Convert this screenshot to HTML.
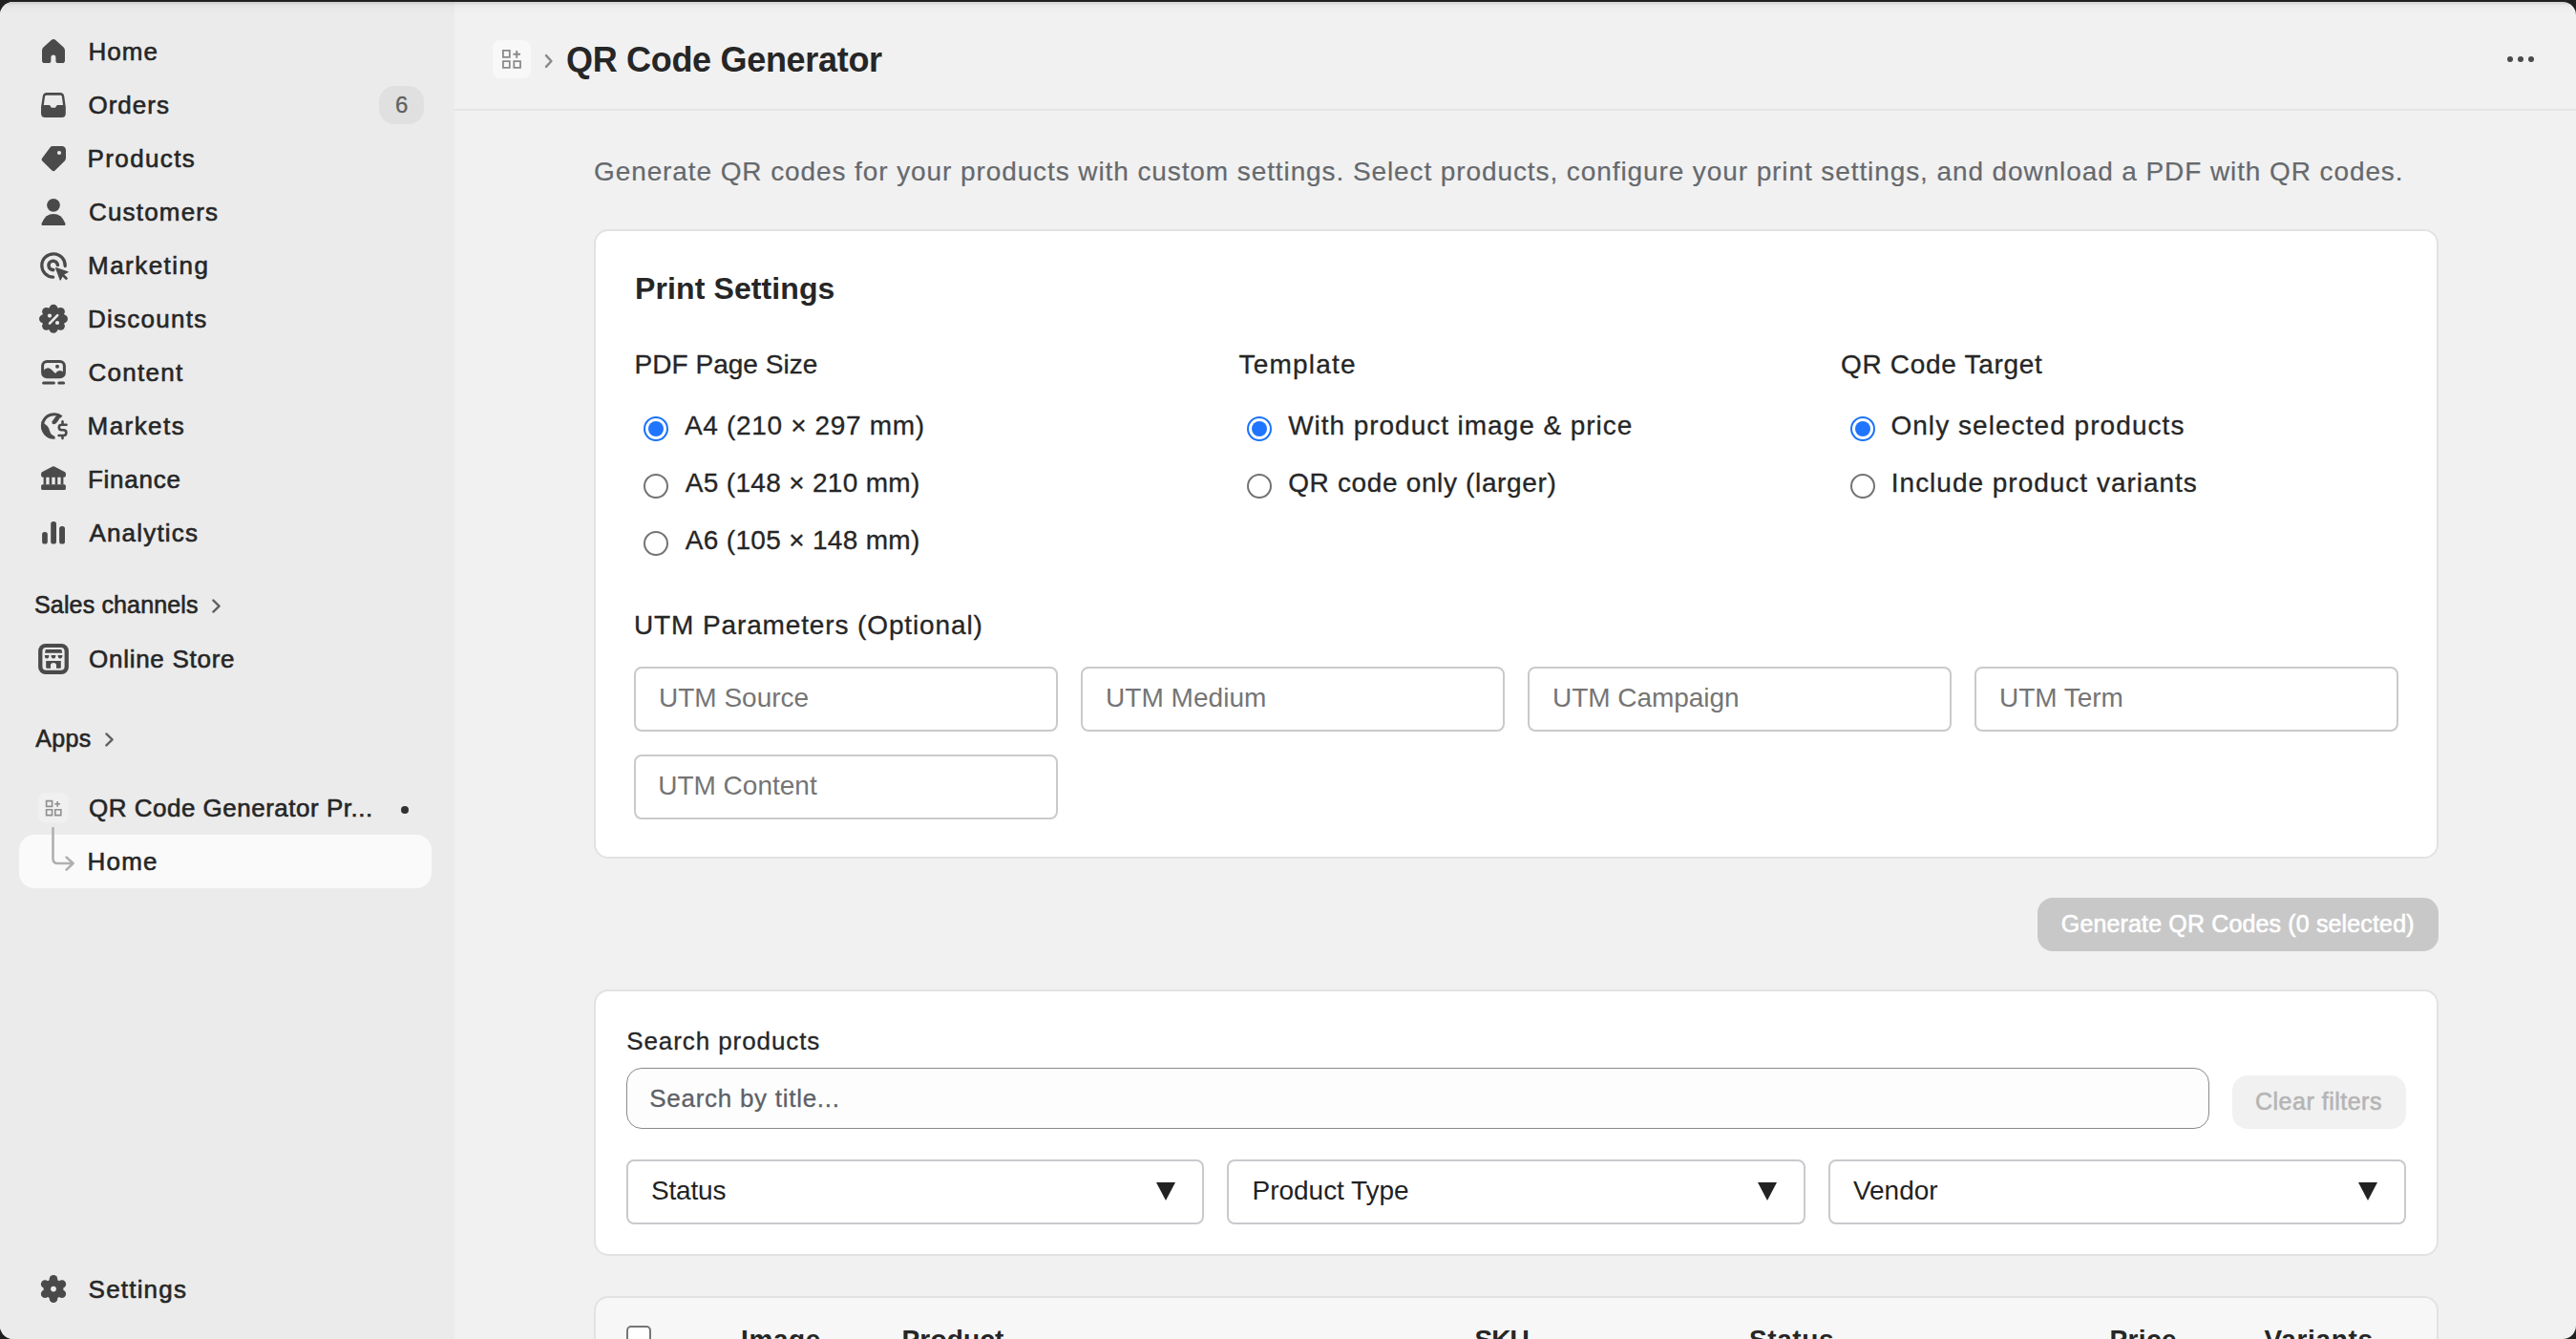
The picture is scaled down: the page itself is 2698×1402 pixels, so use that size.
<!DOCTYPE html>
<html><head><meta charset="utf-8"><style>
html,body{margin:0;padding:0;width:2698px;height:1402px;overflow:hidden;background:#202020;}
body{font-family:"Liberation Sans",sans-serif;}
#frame{position:absolute;left:0;top:2px;width:2698px;height:1400px;border-radius:14px;overflow:hidden;background:#f1f1f1;}
#side{position:absolute;left:0;top:0;width:476px;height:1400px;background:#ebebeb;}
.t{position:absolute;white-space:pre;}
.r{position:absolute;}
</style></head><body>
<div id="frame">
<div id="side"></div>
<div style="position:absolute;left:0;top:0;width:2698px;height:14px;background:linear-gradient(to bottom, rgba(0,0,0,0.11) 0px, rgba(0,0,0,0.10) 1.5px, rgba(0,0,0,0.045) 3px, rgba(0,0,0,0.02) 6px, rgba(0,0,0,0) 13px);"></div>
<div style="position:absolute;left:0;top:-2px;width:2698px;height:1402px;">
<div class="t" id="t0" style="left:92.60px;top:40.99px;font-size:26px;line-height:26px;color:#262626;font-weight:400;-webkit-text-stroke:0.6px #262626;letter-spacing:1.000px;">Home</div>
<div class="t" id="t1" style="left:92.40px;top:96.99px;font-size:26px;line-height:26px;color:#262626;font-weight:400;-webkit-text-stroke:0.6px #262626;letter-spacing:1.040px;">Orders</div>
<div class="t" id="t2" style="left:91.60px;top:152.99px;font-size:26px;line-height:26px;color:#262626;font-weight:400;-webkit-text-stroke:0.6px #262626;letter-spacing:1.371px;">Products</div>
<div class="t" id="t3" style="left:93.00px;top:208.99px;font-size:26px;line-height:26px;color:#262626;font-weight:400;-webkit-text-stroke:0.6px #262626;letter-spacing:1.175px;">Customers</div>
<div class="t" id="t4" style="left:92.00px;top:264.99px;font-size:26px;line-height:26px;color:#262626;font-weight:400;-webkit-text-stroke:0.6px #262626;letter-spacing:1.475px;">Marketing</div>
<div class="t" id="t5" style="left:92.00px;top:320.99px;font-size:26px;line-height:26px;color:#262626;font-weight:400;-webkit-text-stroke:0.6px #262626;letter-spacing:1.250px;">Discounts</div>
<div class="t" id="t6" style="left:92.40px;top:376.99px;font-size:26px;line-height:26px;color:#262626;font-weight:400;-webkit-text-stroke:0.6px #262626;letter-spacing:1.300px;">Content</div>
<div class="t" id="t7" style="left:91.60px;top:432.99px;font-size:26px;line-height:26px;color:#262626;font-weight:400;-webkit-text-stroke:0.6px #262626;letter-spacing:1.433px;">Markets</div>
<div class="t" id="t8" style="left:92.00px;top:488.99px;font-size:26px;line-height:26px;color:#262626;font-weight:400;-webkit-text-stroke:0.6px #262626;letter-spacing:0.733px;">Finance</div>
<div class="t" id="t9" style="left:93.40px;top:544.99px;font-size:26px;line-height:26px;color:#262626;font-weight:400;-webkit-text-stroke:0.6px #262626;letter-spacing:1.200px;">Analytics</div>
<div class="r" style="left:397px;top:90px;width:47px;height:40px;background:#e0e0e0;border-radius:16px;"></div>
<div class="t" id="t10" style="left:414.00px;top:97.68px;font-size:24px;line-height:24px;color:#616161;font-weight:400;-webkit-text-stroke:0.3px #616161;">6</div>
<div class="t" id="t11" style="left:36.00px;top:620.84px;font-size:25px;line-height:25px;color:#262626;font-weight:400;-webkit-text-stroke:0.6px #262626;letter-spacing:0.154px;">Sales channels</div>
<div class="t" id="t12" style="left:93.00px;top:676.99px;font-size:26px;line-height:26px;color:#262626;font-weight:400;-webkit-text-stroke:0.6px #262626;letter-spacing:0.727px;">Online Store</div>
<div class="t" id="t13" style="left:37.20px;top:760.84px;font-size:25px;line-height:25px;color:#262626;font-weight:400;-webkit-text-stroke:0.6px #262626;letter-spacing:0.400px;">Apps</div>
<div class="t" id="t14" style="left:93.00px;top:832.99px;font-size:26px;line-height:26px;color:#262626;font-weight:400;-webkit-text-stroke:0.6px #262626;letter-spacing:0.500px;">QR Code Generator Pr...</div>
<div class="r" style="left:420px;top:844px;width:8px;height:8px;background:#303030;border-radius:50%;"></div>
<div class="r" style="left:20px;top:874px;width:432px;height:56px;background:#fafafa;border-radius:16px;"></div>
<div class="t" id="t15" style="left:91.60px;top:888.99px;font-size:26px;line-height:26px;color:#262626;font-weight:400;-webkit-text-stroke:0.6px #262626;letter-spacing:1.200px;">Home</div>
<div class="t" id="t16" style="left:92.60px;top:1336.99px;font-size:26px;line-height:26px;color:#262626;font-weight:400;-webkit-text-stroke:0.6px #262626;letter-spacing:1.200px;">Settings</div>
<svg class="r" style="left:0px;top:0px" width="476" height="1402" viewBox="0 0 476 1402"><path fill="#4a4a4a" d="M54.3 41.6 Q56 40.3 57.7 41.6 L66.6 49.6 Q68 50.9 68 53 L68 63.2 Q68 66 65.2 66 L61 66 Q58.4 66 58.4 63.4 L58.4 60.3 Q58.4 57.6 55.9 57.6 Q53.4 57.6 53.4 60.3 L53.4 63.4 Q53.4 66 50.8 66 L46.8 66 Q44 66 44 63.2 L44 53 Q44 50.9 45.4 49.6 Z"/><path fill="#4a4a4a" fill-rule="evenodd" d="M49 97 L63 97 Q66.6 97 67.2 100.6 L68.8 112 L68.8 118.8 Q68.8 123 64.6 123 L47.2 123 Q43 123 43 118.8 L43 112 L44.8 100.6 Q45.4 97 49 97 Z M48.6 99.8 L63.4 99.8 Q64.6 99.8 64.8 101 L66 110 L60.6 110 Q59.6 110 59 111 L58 112.8 L53.8 112.8 L52.8 111 Q52.2 110 51.2 110 L45.8 110 L47.1 101 Q47.3 99.8 48.6 99.8 Z"/><path fill="#4a4a4a" d="M55 153 L64.5 153 Q69 153 69 157.5 L69 165.5 Q69 167.2 67.8 168.4 L57.6 178.4 Q56 180 54.4 178.4 L44.2 168.4 Q42.8 167 44.2 165.6 L52.6 154.2 Q53.6 153 55 153 Z"/><circle cx="62" cy="160" r="2.1" fill="#ebebeb"/><circle cx="56" cy="214.8" r="6.9" fill="#4a4a4a"/><path fill="#4a4a4a" d="M45.2 236 Q42.8 236 43.8 233.4 Q47.6 224 56 224 Q64.4 224 68.2 233.4 Q69.2 236 66.8 236 Z"/><path fill="none" stroke="#4a4a4a" stroke-width="3.3" stroke-linecap="round" d="M68.2 278.5 A12.2 12.2 0 1 0 55.6 290.2"/><path fill="none" stroke="#4a4a4a" stroke-width="3.6" stroke-linecap="round" d="M60.4 277.4 A4.7 4.7 0 1 0 55.8 282.6"/><path fill="#4a4a4a" stroke="#4a4a4a" stroke-width="1.2" stroke-linejoin="round" d="M58.6 280.6 L71 284.8 L66 287.4 L63.2 293 Z"/><path stroke="#4a4a4a" stroke-width="2.8" stroke-linecap="round" d="M65.6 287.8 L69.4 291.4"/><circle cx="56" cy="333.8" r="12.2" fill="#4a4a4a"/><circle cx="56.00" cy="323.20" r="4.4" fill="#4a4a4a"/><circle cx="63.50" cy="326.30" r="4.4" fill="#4a4a4a"/><circle cx="66.60" cy="333.80" r="4.4" fill="#4a4a4a"/><circle cx="63.50" cy="341.30" r="4.4" fill="#4a4a4a"/><circle cx="56.00" cy="344.40" r="4.4" fill="#4a4a4a"/><circle cx="48.50" cy="341.30" r="4.4" fill="#4a4a4a"/><circle cx="45.40" cy="333.80" r="4.4" fill="#4a4a4a"/><circle cx="48.50" cy="326.30" r="4.4" fill="#4a4a4a"/><path stroke="#ebebeb" stroke-width="2.6" stroke-linecap="round" d="M52 338.6 L60.2 330.2"/><circle cx="52" cy="330.6" r="2.1" fill="#ebebeb"/><circle cx="60" cy="338" r="2.1" fill="#ebebeb"/><rect x="44.6" y="378.4" width="22.8" height="16.4" rx="4.6" fill="none" stroke="#4a4a4a" stroke-width="3"/><path fill="#4a4a4a" d="M45.5 388 Q48 385 50.6 385.3 Q53 385.6 55.5 388.5 L58 391 Q60 388.2 62.5 388 Q65 388 67 390 L67 392 Q67 395 64 395 L48 395 Q45 395 45 392 Z"/><circle cx="60" cy="383.8" r="2" fill="#4a4a4a"/><path stroke="#4a4a4a" stroke-width="3" stroke-linecap="round" d="M45.6 401 L56.4 401 M61.8 401 L66.6 401"/><path fill="none" stroke="#4a4a4a" stroke-width="3" d="M64.5 436.5 A12.3 12.3 0 1 0 57.5 458.3"/><path fill="#4a4a4a" d="M43.5 441 Q47 444 49.5 446 Q51.5 448 52 451 Q52.5 454 55 455.5 Q57 456.5 57.5 458.8 L52 458.8 Q45 456 43.5 449 Z"/><path fill="#4a4a4a" d="M60.5 434 Q57 437 54.5 441.5 Q54 443.5 55.5 444 Q57.5 444.5 59 443 Q61.5 440 63.5 436 Z"/><path fill="none" stroke="#4a4a4a" stroke-width="2.6" stroke-linecap="round" d="M69.5 444.8 L64.6 444.8 Q61.8 444.8 61.8 447.5 Q61.8 450.2 64.6 450.2 L66.4 450.2 Q69.4 450.2 69.4 453.1 Q69.4 456 66.4 456 L61.6 456 M65.5 441.4 L65.5 444.8 M65.5 456 L65.5 459"/><path fill="#4a4a4a" d="M55 488.6 Q56 488 57 488.6 L67.6 494 Q68.9 494.7 68.9 496 L68.9 498 Q68.9 499.8 67 499.8 L45 499.8 Q43.1 499.8 43.1 498 L43.1 496 Q43.1 494.7 44.4 494 Z"/><path fill="#4a4a4a" d="M45.6 499 H48.3 V507.5 H45.6Z M51.6 499 H54.3 V507.5 H51.6Z M57.7 499 H60.3 V507.5 H57.7Z M63.6 499 H66.4 V507.5 H63.6Z"/><rect x="43.1" y="507.2" width="25.8" height="5.8" rx="1.6" fill="#4a4a4a"/><rect x="44.1" y="556.9" width="5.7" height="12.7" rx="2.6" fill="#4a4a4a"/><rect x="53.2" y="546" width="5.8" height="23.6" rx="2.6" fill="#4a4a4a"/><rect x="62.1" y="551" width="5.9" height="18.6" rx="2.6" fill="#4a4a4a"/><rect x="40.1" y="674" width="31.8" height="31.9" rx="7.5" fill="#4a4a4a"/><rect x="44.4" y="678" width="23.2" height="23.8" rx="4" fill="#ebebeb"/><path fill="#4a4a4a" d="M47.8 680 H64.4 L65.2 683.8 H47 Z"/><path fill="#4a4a4a" d="M46.8 686 H51.4 Q51.4 689.6 49.1 689.6 Q46.8 689.6 46.8 686Z M53.6 686 H58.4 Q58.4 689.6 56 689.6 Q53.6 689.6 53.6 686Z M60.6 686 H65.4 Q65.4 689.6 63 689.6 Q60.6 689.6 60.6 686Z"/><path fill="#4a4a4a" d="M48.2 692 H63.8 V698.8 Q63.8 699.8 62.8 699.8 H59 V696.8 Q59 694 56 694 Q53 694 53 696.8 V699.8 H49.2 Q48.2 699.8 48.2 698.8Z"/><circle cx="56" cy="1349.6" r="10.4" fill="#4a4a4a"/><circle cx="56.00" cy="1339.40" r="4.3" fill="#4a4a4a"/><circle cx="64.83" cy="1344.50" r="4.3" fill="#4a4a4a"/><circle cx="64.83" cy="1354.70" r="4.3" fill="#4a4a4a"/><circle cx="56.00" cy="1359.80" r="4.3" fill="#4a4a4a"/><circle cx="47.17" cy="1354.70" r="4.3" fill="#4a4a4a"/><circle cx="47.17" cy="1344.50" r="4.3" fill="#4a4a4a"/><circle cx="56" cy="1349.6" r="2.9" fill="#ebebeb"/><path fill="none" stroke="#616161" stroke-width="2.4" stroke-linecap="round" stroke-linejoin="round" d="M223.4 628.6 L229.6 634.6 L223.4 640.6"/><path fill="none" stroke="#616161" stroke-width="2.4" stroke-linecap="round" stroke-linejoin="round" d="M111.4 768.4 L117.6 774.4 L111.4 780.4"/><rect x="40.1" y="830.3" width="31.6" height="31.3" rx="7" fill="#f0f0f0"/><path fill="none" stroke="#8f8f8f" stroke-width="1.6" d="M48.6 838.6 H54.6 V844.4 H48.6Z M48.6 847.8 H54.6 V853.6 H48.6Z M57.8 847.8 H63.8 V853.6 H57.8Z M57.3 841.8 H63.1 M60.2 838.9 V844.7"/><path fill="none" stroke="#b0b0b0" stroke-width="2.6" stroke-linecap="round" stroke-linejoin="round" d="M55.5 867 V899 Q55.5 904 60.5 904 H76.6 M69.6 897.6 L76.6 904 L69.6 910.6"/></svg>

<div class="r" style="left:516px;top:42px;width:40px;height:40px;background:#f8f8f8;border-radius:8px;"></div>
<svg class="r" style="left:500px;top:30px" width="100" height="60" viewBox="500 30 100 60"><path fill="none" stroke="#8a8a8a" stroke-width="1.8" d="M526.9 52.9 H533.8 V59.9 H526.9Z M526.9 64.2 H533.8 V70.8 H526.9Z M538.3 64.2 H545 V70.8 H538.3Z"/><path fill="none" stroke="#8a8a8a" stroke-width="1.9" d="M537.4 56.7 H545 M541.2 52.9 V60.8"/><path fill="none" stroke="#8a8a8a" stroke-width="2.5" stroke-linecap="round" stroke-linejoin="round" d="M572 58.2 L577.4 64 L572 69.8"/></svg>
<div class="t" id="t17" style="left:593.00px;top:44.53px;font-size:36px;line-height:36px;color:#262626;font-weight:700;letter-spacing:-0.312px;">QR Code Generator</div>
<div class="r" style="left:2625.8px;top:58.8px;width:6.4px;height:6.4px;background:#4a4a4a;border-radius:50%;"></div>
<div class="r" style="left:2636.8px;top:58.8px;width:6.4px;height:6.4px;background:#4a4a4a;border-radius:50%;"></div>
<div class="r" style="left:2647.8px;top:58.8px;width:6.4px;height:6.4px;background:#4a4a4a;border-radius:50%;"></div>
<div class="r" style="left:476px;top:114px;width:2222px;height:2px;background:#e6e6e6;"></div>
<div class="t" id="t18" style="left:622.00px;top:166.30px;font-size:28px;line-height:28px;color:#66696d;font-weight:400;-webkit-text-stroke:0.2px #66696d;letter-spacing:0.906px;">Generate QR codes for your products with custom settings. Select products, configure your print settings, and download a PDF with QR codes.</div>
<div class="r" style="left:622px;top:240px;width:1931.5px;height:659px;background:#fff;border:2px solid #e1e2e4;box-sizing:border-box;border-radius:15px;"></div>
<div class="t" id="t19" style="left:665.00px;top:285.91px;font-size:32px;line-height:32px;color:#262626;font-weight:700;letter-spacing:0.108px;">Print Settings</div>
<div class="t" id="t20" style="left:664.60px;top:368.30px;font-size:28px;line-height:28px;color:#262626;font-weight:400;-webkit-text-stroke:0.3px #262626;letter-spacing:0.017px;">PDF Page Size</div>
<div class="r" style="left:674px;top:436px;width:26px;height:26px;border:2.4px solid #1a73f8;box-sizing:border-box;border-radius:50%;background:#fff;"></div>
<div class="r" style="left:679px;top:441px;width:16px;height:16px;background:#1f75fe;border-radius:50%;"></div>
<div class="t" id="t21" style="left:717.00px;top:432.30px;font-size:28px;line-height:28px;color:#262626;font-weight:400;-webkit-text-stroke:0.3px #262626;letter-spacing:0.663px;">A4 (210 × 297 mm)</div>
<div class="r" style="left:674px;top:496px;width:26px;height:26px;border:2px solid #737373;box-sizing:border-box;border-radius:50%;background:#fff;"></div>
<div class="t" id="t22" style="left:717.80px;top:492.30px;font-size:28px;line-height:28px;color:#262626;font-weight:400;-webkit-text-stroke:0.3px #262626;letter-spacing:0.312px;">A5 (148 × 210 mm)</div>
<div class="r" style="left:674px;top:556px;width:26px;height:26px;border:2px solid #737373;box-sizing:border-box;border-radius:50%;background:#fff;"></div>
<div class="t" id="t23" style="left:717.80px;top:552.30px;font-size:28px;line-height:28px;color:#262626;font-weight:400;-webkit-text-stroke:0.3px #262626;letter-spacing:0.312px;">A6 (105 × 148 mm)</div>
<div class="t" id="t24" style="left:1297.60px;top:368.30px;font-size:28px;line-height:28px;color:#262626;font-weight:400;-webkit-text-stroke:0.3px #262626;letter-spacing:1.200px;">Template</div>
<div class="r" style="left:1306px;top:436px;width:26px;height:26px;border:2.4px solid #1a73f8;box-sizing:border-box;border-radius:50%;background:#fff;"></div>
<div class="r" style="left:1311px;top:441px;width:16px;height:16px;background:#1f75fe;border-radius:50%;"></div>
<div class="t" id="t25" style="left:1349.20px;top:432.30px;font-size:28px;line-height:28px;color:#262626;font-weight:400;-webkit-text-stroke:0.3px #262626;letter-spacing:0.960px;">With product image &amp; price</div>
<div class="r" style="left:1306px;top:496px;width:26px;height:26px;border:2px solid #737373;box-sizing:border-box;border-radius:50%;background:#fff;"></div>
<div class="t" id="t26" style="left:1349.20px;top:492.30px;font-size:28px;line-height:28px;color:#262626;font-weight:400;-webkit-text-stroke:0.3px #262626;letter-spacing:0.650px;">QR code only (larger)</div>
<div class="t" id="t27" style="left:1928.00px;top:368.30px;font-size:28px;line-height:28px;color:#262626;font-weight:400;-webkit-text-stroke:0.3px #262626;letter-spacing:0.692px;">QR Code Target</div>
<div class="r" style="left:1938px;top:436px;width:26px;height:26px;border:2.4px solid #1a73f8;box-sizing:border-box;border-radius:50%;background:#fff;"></div>
<div class="r" style="left:1943px;top:441px;width:16px;height:16px;background:#1f75fe;border-radius:50%;"></div>
<div class="t" id="t28" style="left:1980.40px;top:432.30px;font-size:28px;line-height:28px;color:#262626;font-weight:400;-webkit-text-stroke:0.3px #262626;letter-spacing:1.057px;">Only selected products</div>
<div class="r" style="left:1938px;top:496px;width:26px;height:26px;border:2px solid #737373;box-sizing:border-box;border-radius:50%;background:#fff;"></div>
<div class="t" id="t29" style="left:1980.80px;top:492.30px;font-size:28px;line-height:28px;color:#262626;font-weight:400;-webkit-text-stroke:0.3px #262626;letter-spacing:0.991px;">Include product variants</div>
<div class="t" id="t30" style="left:664.00px;top:641.30px;font-size:28px;line-height:28px;color:#262626;font-weight:400;-webkit-text-stroke:0.3px #262626;letter-spacing:0.875px;">UTM Parameters (Optional)</div>
<div class="r" style="left:664px;top:698px;width:444px;height:68px;border:2px solid #c9cacd;box-sizing:border-box;border-radius:8px;background:#fff;"></div>
<div class="t" id="t31" style="left:690.00px;top:717.30px;font-size:28px;line-height:28px;color:#757575;font-weight:400;">UTM Source</div>
<div class="r" style="left:1132px;top:698px;width:444px;height:68px;border:2px solid #c9cacd;box-sizing:border-box;border-radius:8px;background:#fff;"></div>
<div class="t" id="t32" style="left:1158.00px;top:717.30px;font-size:28px;line-height:28px;color:#757575;font-weight:400;letter-spacing:0.044px;">UTM Medium</div>
<div class="r" style="left:1600px;top:698px;width:444px;height:68px;border:2px solid #c9cacd;box-sizing:border-box;border-radius:8px;background:#fff;"></div>
<div class="t" id="t33" style="left:1626.00px;top:717.30px;font-size:28px;line-height:28px;color:#757575;font-weight:400;letter-spacing:-0.036px;">UTM Campaign</div>
<div class="r" style="left:2068px;top:698px;width:444px;height:68px;border:2px solid #c9cacd;box-sizing:border-box;border-radius:8px;background:#fff;"></div>
<div class="t" id="t34" style="left:2094.00px;top:717.30px;font-size:28px;line-height:28px;color:#757575;font-weight:400;letter-spacing:-0.057px;">UTM Term</div>
<div class="r" style="left:664px;top:790px;width:444px;height:68px;border:2px solid #c9cacd;box-sizing:border-box;border-radius:8px;background:#fff;"></div>
<div class="t" id="t35" style="left:689.20px;top:809.30px;font-size:28px;line-height:28px;color:#757575;font-weight:400;">UTM Content</div>
<div class="r" style="left:2134px;top:940px;width:420px;height:56px;background:#c8c8c8;border-radius:16px;"></div>
<div class="t" id="t36" style="left:2158.80px;top:954.84px;font-size:25px;line-height:25px;color:#ffffff;font-weight:400;-webkit-text-stroke:0.6px #ffffff;letter-spacing:0.148px;">Generate QR Codes (0 selected)</div>
<div class="r" style="left:622px;top:1036px;width:1931.5px;height:279px;background:#fff;border:2px solid #e1e2e4;box-sizing:border-box;border-radius:15px;"></div>
<div class="t" id="t37" style="left:656.20px;top:1076.99px;font-size:26px;line-height:26px;color:#262626;font-weight:400;-webkit-text-stroke:0.3px #262626;letter-spacing:0.914px;">Search products</div>
<div class="r" style="left:656px;top:1118px;width:1658px;height:64px;border:1.5px solid #8a8a8a;box-sizing:border-box;border-radius:16px;background:#fdfdfd;"></div>
<div class="t" id="t38" style="left:680.20px;top:1136.99px;font-size:26px;line-height:26px;color:#5e6166;font-weight:400;-webkit-text-stroke:0.3px #5e6166;letter-spacing:0.729px;">Search by title...</div>
<div class="r" style="left:2338px;top:1126px;width:182px;height:56px;background:#f1f1f1;border-radius:16px;"></div>
<div class="t" id="t39" style="left:2362.00px;top:1140.84px;font-size:25px;line-height:25px;color:#b5b5b5;font-weight:400;-webkit-text-stroke:0.6px #b5b5b5;letter-spacing:0.500px;">Clear filters</div>
<div class="r" style="left:656px;top:1214px;width:605px;height:68px;border:2px solid #c9cacd;box-sizing:border-box;border-radius:8px;background:#fff;"></div>
<div class="t" id="t40" style="left:682.00px;top:1233.30px;font-size:28px;line-height:28px;color:#222222;font-weight:400;letter-spacing:-0.200px;">Status</div>
<svg class="r" style="left:1211px;top:1238px" width="20" height="20" viewBox="0 0 20 20"><path d="M0 0H20L10 19Z" fill="#222"/></svg>
<div class="r" style="left:1285px;top:1214px;width:606px;height:68px;border:2px solid #c9cacd;box-sizing:border-box;border-radius:8px;background:#fff;"></div>
<div class="t" id="t41" style="left:1311.60px;top:1233.30px;font-size:28px;line-height:28px;color:#222222;font-weight:400;letter-spacing:-0.036px;">Product Type</div>
<svg class="r" style="left:1841px;top:1238px" width="20" height="20" viewBox="0 0 20 20"><path d="M0 0H20L10 19Z" fill="#222"/></svg>
<div class="r" style="left:1915px;top:1214px;width:605px;height:68px;border:2px solid #c9cacd;box-sizing:border-box;border-radius:8px;background:#fff;"></div>
<div class="t" id="t42" style="left:1941.00px;top:1233.30px;font-size:28px;line-height:28px;color:#222222;font-weight:400;letter-spacing:-0.040px;">Vendor</div>
<svg class="r" style="left:2470px;top:1238px" width="20" height="20" viewBox="0 0 20 20"><path d="M0 0H20L10 19Z" fill="#222"/></svg>
<div class="r" style="left:622px;top:1357px;width:1931.5px;height:120px;background:#f7f7f7;border:2px solid #e1e2e4;box-sizing:border-box;border-radius:15px;"></div>
<div class="r" style="left:656px;top:1388px;width:26px;height:26px;border:2px solid #767676;box-sizing:border-box;border-radius:5px;background:#fff;"></div>
<div class="t" id="t43" style="left:776.00px;top:1388.80px;font-size:28px;line-height:28px;color:#262626;font-weight:700;letter-spacing:0.625px;">Image</div>
<div class="t" id="t44" style="left:944.50px;top:1388.80px;font-size:28px;line-height:28px;color:#262626;font-weight:700;letter-spacing:0.167px;">Product</div>
<div class="t" id="t45" style="left:1544.50px;top:1388.80px;font-size:28px;line-height:28px;color:#262626;font-weight:700;letter-spacing:-1.000px;">SKU</div>
<div class="t" id="t46" style="left:1832.00px;top:1388.80px;font-size:28px;line-height:28px;color:#262626;font-weight:700;letter-spacing:0.600px;">Status</div>
<div class="t" id="t47" style="left:2209.50px;top:1388.80px;font-size:28px;line-height:28px;color:#262626;font-weight:700;letter-spacing:0.375px;">Price</div>
<div class="t" id="t48" style="left:2371.50px;top:1388.80px;font-size:28px;line-height:28px;color:#262626;font-weight:700;letter-spacing:0.643px;">Variants</div>

</div>
</div>
</body></html>
